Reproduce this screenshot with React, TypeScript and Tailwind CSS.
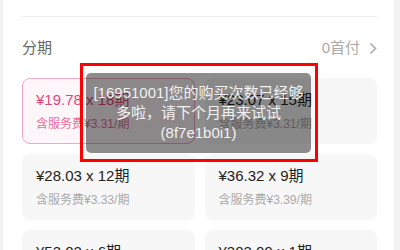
import React from "react";

const FONT = { fontFamily: '"Liberation Sans", "Noto Sans CJK SC", sans-serif' };

type Plan = { price: string; n: number; fee: string; active?: boolean };

const PLANS: Plan[] = [
  { price: "19.78", n: 18, fee: "3.31", active: true },
  { price: "23.07", n: 15, fee: "3.31" },
  { price: "28.03", n: 12, fee: "3.33" },
  { price: "36.32", n: 9, fee: "3.39" },
  { price: "53.02", n: 6, fee: "3.45" },
  { price: "303.09", n: 1, fee: "3.50" },
];

function PlanCard({ plan }: { plan: Plan }) {
  return (
    <div
      className={
        plan.active
          ? "h-[66px] rounded-[8px] border border-[#f2a9c5] bg-[#fff6f9] pl-[13px] pt-[12px]"
          : "h-[66px] rounded-[8px] border border-[#f7f7f7] bg-[#f7f7f7] pl-[13px] pt-[12px]"
      }
    >
      <div
        className={
          plan.active
            ? "text-[15px] leading-[18px] text-[#e2467c]"
            : "text-[15px] leading-[18px] text-[#222]"
        }
      >
        ¥{plan.price} x {plan.n}期
      </div>
      <div
        className={
          plan.active
            ? "mt-[7px] text-[12px] leading-[16px] text-[#e5709a]"
            : "mt-[7px] text-[12px] leading-[16px] text-[#aaa]"
        }
      >
        含服务费¥{plan.fee}/期
      </div>
    </div>
  );
}

export default function App() {
  return (
    <div className="relative w-[400px] h-[250px] overflow-hidden bg-[#f2f2f2]" style={FONT}>
      <div className="ml-[3px] w-[391px] h-full bg-white pl-[19px] pr-[17px] pt-[16px]">
        <div className="border-t border-[#efefef]" />

        <div className="mt-[21px] h-[20px] flex items-center justify-between">
          <span className="text-[15px] text-[#666]">分期</span>
          <div className="flex items-center gap-[9px] text-[15px] text-[#aaa]">
            <span>0首付</span>
            <svg width="8" height="13" viewBox="0 0 8 13" fill="none">
              <polyline points="1.5,1.5 6.5,6.5 1.5,11.5" stroke="#aaa" strokeWidth="1.6" />
            </svg>
          </div>
        </div>

        <div className="mt-[20px] grid grid-cols-2 gap-x-[10px] gap-y-[10px]">
          {PLANS.map((p) => (
            <PlanCard key={p.n} plan={p} />
          ))}
        </div>
      </div>

      {/* toast */}
      <div className="absolute left-[86px] top-[73px] w-[225px] h-[80px] rounded-[5px] bg-black/45 flex flex-col items-center justify-center text-[15px] leading-[20px] text-[#f2f2f2]">
        <span>[16951001]您的购买次数已经够</span>
        <span>多啦，请下个月再来试试</span>
        <span>(8f7e1b0i1)</span>
      </div>

      {/* annotation */}
      <div className="absolute left-[80px] top-[63px] w-[238px] h-[99px] border-[3px] border-[#ff0000]" />
    </div>
  );
}
